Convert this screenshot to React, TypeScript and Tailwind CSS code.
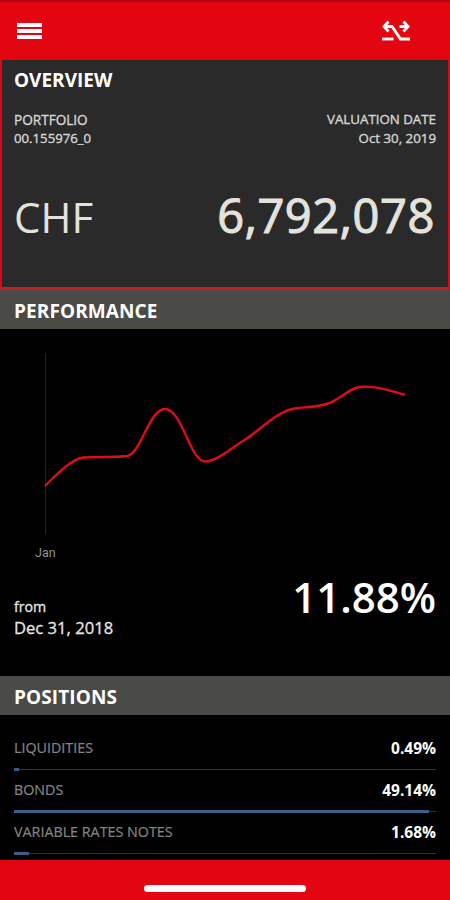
const positions = [
  { name: 'LIQUIDITIES', value: '0.49%', share: 1.2 },
  { name: 'BONDS', value: '49.14%', share: 98.4 },
  { name: 'VARIABLE RATES NOTES', value: '1.68%', share: 3.5 },
];

function SectionHeader({ title }: { title: string }) {
  return (
    <h2 className="mb-px flex h-[39px] shrink-0 items-center bg-[#4a4a47] px-3.5 pt-0.5 text-[19px] font-bold leading-6 tracking-[0.1px] text-white">
      {title}
    </h2>
  );
}

function Header() {
  return (
    <header className="flex h-[60px] shrink-0 items-center justify-between border-t-2 border-[#b4060f] bg-[#e30611] pl-[17px] pr-[39px]">
      <button aria-label="Menu" className="flex w-[25px] flex-col gap-0.5">
        <span className="h-1 bg-white" />
        <span className="h-1 bg-white" />
        <span className="h-1 bg-white" />
      </button>
      <button aria-label="Switch portfolio">
        <svg width="30" height="22" viewBox="0 0 30 22" fill="none" stroke="white" strokeWidth="2.8">
          <path d="M7.5 1.5L3 6.5L7.5 11.5M3 6.5H11L19.5 19H29" />
          <path d="M18.5 6.5H27M22.5 1.5L27 6.5L22.5 11.5" />
          <path d="M1 19H12.5" />
        </svg>
      </button>
    </header>
  );
}

function Overview() {
  return (
    <section className="flex h-[230px] shrink-0 flex-col border-x-2 border-b-3 border-x-[#d90a15] border-b-[#c5202a] bg-[#2a2a2a] px-3">
      <h2 className="mt-2 text-[19px] font-bold leading-6 text-white">OVERVIEW</h2>
      <div className="mt-[18px] flex justify-between text-[13.3px] leading-[19px] text-[#d6d6d4] [-webkit-text-stroke:0.35px_#d6d6d4]">
        <div>
          <p className="text-[13.6px]">PORTFOLIO</p>
          <p className="text-[13.2px]">00.155976_0</p>
        </div>
        <div className="text-right">
          <p>VALUATION DATE</p>
          <p>Oct 30, 2019</p>
        </div>
      </div>
      <div className="mt-[37px] flex items-baseline justify-between text-[#e4e2dd]">
        <span className="text-[42px] leading-[61px]">CHF</span>
        <span className="pr-px text-[47px] leading-[61px] tracking-[0.6px] [-webkit-text-stroke:1.1px_#e4e2dd]">6,792,078</span>
      </div>
    </section>
  );
}

function Performance() {
  return (
    <section className="flex h-[386px] shrink-0 flex-col">
      <SectionHeader title="PERFORMANCE" />
      <svg className="shrink-0" width="450" height="240" viewBox="0 330 450 240" fill="none">
        <path d="M45.5 353V534" stroke="#222222" />
        <path
          d="M45 486C58 473 72 459 83 457.5C98 456.5 114 457.5 127 456C141 454 149 409 165 409C182 409 190 461 205 461.5C218 461 231 448 246 439C260 430 274 414 292 409C305 406.5 315 408 328 403.5C341 399 350 387 362 386.7C378 386 391 391 405 395"
          stroke="#df0b16"
          strokeWidth="2.4"
        />
        <text x="35" y="557" fontSize="12.5" fill="#929292" fontFamily="Roboto, sans-serif">
          Jan
        </text>
      </svg>
      <div className="flex justify-between px-3.5 text-white">
        <div className="mt-[26px] leading-[21px] text-[#e6e6e6] [-webkit-text-stroke:0.3px_#e6e6e6]">
          <p className="text-[14.2px]">from</p>
          <p className="text-[16.6px]">Dec 31, 2018</p>
        </div>
        <p className="text-[42px] font-semibold leading-[53px]">11.88%</p>
      </div>
    </section>
  );
}

function Positions() {
  return (
    <section className="flex flex-1 flex-col">
      <SectionHeader title="POSITIONS" />
      <ul className="px-3.5 pt-[11px]">
        {positions.map((position) => (
          <li key={position.name} className="flex h-[42px] flex-col">
            <div className="flex h-[41px] justify-between leading-[42px]">
              <span className="text-[14.3px] text-[#858585] [-webkit-text-stroke:0.2px_#858585]">{position.name}</span>
              <span className="text-[15.5px] font-bold text-white">{position.value}</span>
            </div>
            <div className="flex h-[3px] shrink-0 items-center">
              <div className="h-[3px] bg-[#385f8b]" style={{ width: `${position.share}%` }} />
              <div className="h-px flex-1 bg-[#323235]" />
            </div>
          </li>
        ))}
      </ul>
    </section>
  );
}

export default function App() {
  return (
    <main className="flex h-[900px] w-[450px] flex-col overflow-hidden bg-black font-['Open_Sans',sans-serif]">
      <Header />
      <Overview />
      <Performance />
      <Positions />
      <footer className="flex h-10 shrink-0 justify-center bg-[#e30611] pt-[25px]">
        <div className="h-[7px] w-[162px] rounded-full bg-white" />
      </footer>
    </main>
  );
}
